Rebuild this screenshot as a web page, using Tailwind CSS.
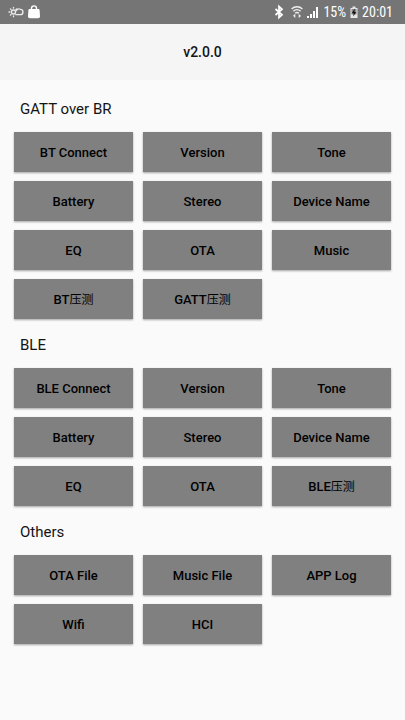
<!DOCTYPE html>
<html lang="en">
<head>
<meta charset="utf-8">
<meta name="viewport" content="width=device-width, initial-scale=1">
<title>v2.0.0</title>
<script src="https://cdn.jsdelivr.net/npm/@tailwindcss/browser@4"></script>
</head>
<body class="min-h-screen bg-[#fafafa] font-[Roboto,'Noto_Sans_CJK_SC',sans-serif] text-[#141414]">
<div class="flex h-6 items-center justify-between bg-[#757575] pr-3 pl-2 text-white">
  <div class="flex items-center gap-1">
    <svg class="h-4 w-4" viewBox="0 0 16 16" fill="none" stroke="#ececec" stroke-width="1.3" stroke-linecap="round" aria-hidden="true">
      <circle cx="5.5" cy="8" r="2"/>
      <path d="M5.500 3.300v.8M5.500 11.900v.8M1 8h.9M2.400 4.900l.6.6M2.400 11.100l.6-.6M8.600 4.900l-.6.6"/>
      <path d="M7.800 10.700h4.300a2.700 2.700 0 0 0 .3-5.400 3 3 0 0 0-4.200 1.400"/>
    </svg>
    <svg class="h-4 w-3" viewBox="0 0 12 16" aria-hidden="true">
      <path d="M.4 6.200C.5 5.400.9 5 1.700 5h8.600c.8 0 1.200.4 1.300 1.200l.4 5.800c.1 1.300-.6 2.200-1.900 2.200H1.900c-1.300 0-2-.9-1.900-2.200z" fill="#fff"/>
      <path d="M3.500 6V4.400a2.500 2.500 0 0 1 5 0V6" fill="none" stroke="#fff" stroke-width="1.400"/>
    </svg>
  </div>
  <div class="flex items-center">
    <svg class="h-4 w-3" viewBox="0 0 12 16" fill="none" stroke="#fff" stroke-width="1.700" aria-hidden="true">
      <path d="M2.500 5l6.500 5.800L6 13.500v-11l3 2.700L2.500 11"/>
    </svg>
    <svg class="ml-1 h-4 w-4" viewBox="0 0 16 16" fill="none" stroke="#f0f0f0" stroke-width="1.400" aria-hidden="true">
      <path d="M2.600 4.900a8 8 0 0 1 10.800 0M4.400 7.200a5.400 5.400 0 0 1 7.200 0M6.200 9.300a2.700 2.700 0 0 1 3.600 0"/>
      <path d="M6.300 9.800v4.200L4 11.800zM9.700 14V9.800L12 12z" fill="#f0f0f0" stroke="none"/>
    </svg>
    <svg class="ml-0.5 h-4 w-3" viewBox="0 0 12 16" fill="#fff" aria-hidden="true">
      <path d="M0 12h2v2H0zM3 10h2v4H3zM6 7h2v7H6zM9 3h2v11H9z"/>
    </svg>
    <span class="ml-1 font-['Roboto_Condensed',Roboto,sans-serif] text-sm leading-6">15%</span>
    <svg class="mx-1 h-4 w-2" viewBox="0 0 8 16" aria-hidden="true">
      <path d="M2.500 2.500h3V4H7.500v10H.5V4h2z" fill="#e6e6e6"/>
      <path d="M1.500 5h5v5.500h-5z" fill="#8a8a8a"/>
      <path d="M4.800 4.500L1.800 9.300h1.900L3.200 12.500l3-4.600H4.400z" fill="#111"/>
    </svg>
    <span class="font-['Roboto_Condensed',Roboto,sans-serif] text-sm leading-6">20:01</span>
  </div>
</div>
<header class="flex h-14 items-center justify-center bg-[#f5f5f5]">
  <h1 class="text-sm font-medium">v2.0.0</h1>
</header>
<main class="px-3.5 pt-[3px] pb-6">
  <section>
    <h2 class="px-1.5 pt-3.5 pb-[11px] text-[15px] leading-6">GATT over BR</h2>
    <div class="grid grid-cols-3 gap-x-2.5 gap-y-[9px] text-[13px] font-medium">
      <button class="h-10 bg-[#808080] pt-0.5 text-black shadow-[0_1px_2px_rgba(0,0,0,0.35)]">BT Connect</button>
      <button class="h-10 bg-[#808080] pt-0.5 text-black shadow-[0_1px_2px_rgba(0,0,0,0.35)]">Version</button>
      <button class="h-10 bg-[#808080] pt-0.5 text-black shadow-[0_1px_2px_rgba(0,0,0,0.35)]">Tone</button>
      <button class="h-10 bg-[#808080] pt-0.5 text-black shadow-[0_1px_2px_rgba(0,0,0,0.35)]">Battery</button>
      <button class="h-10 bg-[#808080] pt-0.5 text-black shadow-[0_1px_2px_rgba(0,0,0,0.35)]">Stereo</button>
      <button class="h-10 bg-[#808080] pt-0.5 text-black shadow-[0_1px_2px_rgba(0,0,0,0.35)]">Device Name</button>
      <button class="h-10 bg-[#808080] pt-0.5 text-black shadow-[0_1px_2px_rgba(0,0,0,0.35)]">EQ</button>
      <button class="h-10 bg-[#808080] pt-0.5 text-black shadow-[0_1px_2px_rgba(0,0,0,0.35)]">OTA</button>
      <button class="h-10 bg-[#808080] pt-0.5 text-black shadow-[0_1px_2px_rgba(0,0,0,0.35)]">Music</button>
      <button class="h-10 bg-[#808080] pt-0.5 text-black shadow-[0_1px_2px_rgba(0,0,0,0.35)]">BT<span class="text-xs font-normal" lang="zh">压测</span></button>
      <button class="h-10 bg-[#808080] pt-0.5 text-black shadow-[0_1px_2px_rgba(0,0,0,0.35)]">GATT<span class="text-xs font-normal" lang="zh">压测</span></button>
    </div>
  </section>
  <section>
    <h2 class="px-1.5 pt-3.5 pb-[11px] text-[15px] leading-6">BLE</h2>
    <div class="grid grid-cols-3 gap-x-2.5 gap-y-[9px] text-[13px] font-medium">
      <button class="h-10 bg-[#808080] pt-0.5 text-black shadow-[0_1px_2px_rgba(0,0,0,0.35)]">BLE Connect</button>
      <button class="h-10 bg-[#808080] pt-0.5 text-black shadow-[0_1px_2px_rgba(0,0,0,0.35)]">Version</button>
      <button class="h-10 bg-[#808080] pt-0.5 text-black shadow-[0_1px_2px_rgba(0,0,0,0.35)]">Tone</button>
      <button class="h-10 bg-[#808080] pt-0.5 text-black shadow-[0_1px_2px_rgba(0,0,0,0.35)]">Battery</button>
      <button class="h-10 bg-[#808080] pt-0.5 text-black shadow-[0_1px_2px_rgba(0,0,0,0.35)]">Stereo</button>
      <button class="h-10 bg-[#808080] pt-0.5 text-black shadow-[0_1px_2px_rgba(0,0,0,0.35)]">Device Name</button>
      <button class="h-10 bg-[#808080] pt-0.5 text-black shadow-[0_1px_2px_rgba(0,0,0,0.35)]">EQ</button>
      <button class="h-10 bg-[#808080] pt-0.5 text-black shadow-[0_1px_2px_rgba(0,0,0,0.35)]">OTA</button>
      <button class="h-10 bg-[#808080] pt-0.5 text-black shadow-[0_1px_2px_rgba(0,0,0,0.35)]">BLE<span class="text-xs font-normal" lang="zh">压测</span></button>
    </div>
  </section>
  <section>
    <h2 class="px-1.5 pt-3.5 pb-[11px] text-[15px] leading-6">Others</h2>
    <div class="grid grid-cols-3 gap-x-2.5 gap-y-[9px] text-[13px] font-medium">
      <button class="h-10 bg-[#808080] pt-0.5 text-black shadow-[0_1px_2px_rgba(0,0,0,0.35)]">OTA File</button>
      <button class="h-10 bg-[#808080] pt-0.5 text-black shadow-[0_1px_2px_rgba(0,0,0,0.35)]">Music File</button>
      <button class="h-10 bg-[#808080] pt-0.5 text-black shadow-[0_1px_2px_rgba(0,0,0,0.35)]">APP Log</button>
      <button class="h-10 bg-[#808080] pt-0.5 text-black shadow-[0_1px_2px_rgba(0,0,0,0.35)]">Wifi</button>
      <button class="h-10 bg-[#808080] pt-0.5 text-black shadow-[0_1px_2px_rgba(0,0,0,0.35)]">HCI</button>
    </div>
  </section>
</main>
</body>
</html>
